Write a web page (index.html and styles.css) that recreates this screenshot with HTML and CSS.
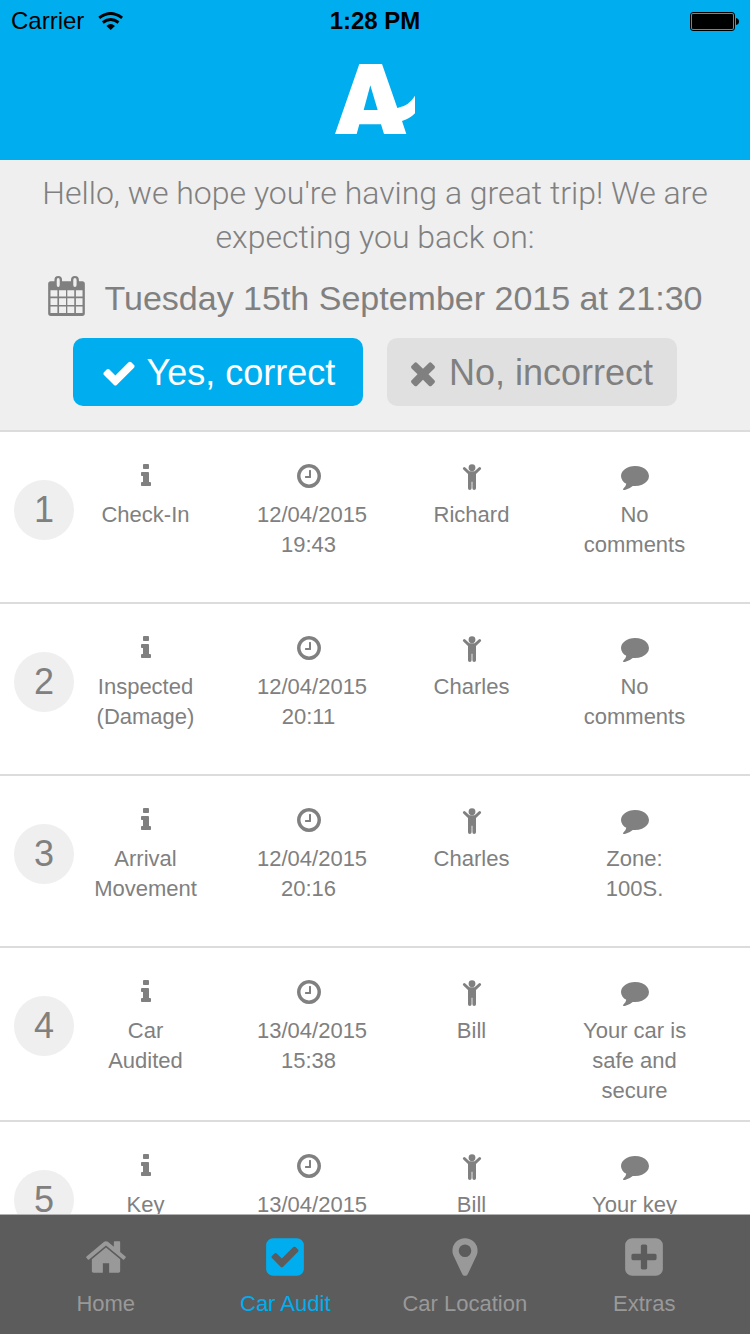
FILE: index.html
```html
<!DOCTYPE html>
<html lang="en">
<head>
<meta charset="utf-8">
<meta name="viewport" content="width=device-width, initial-scale=1">
<title>Car Audit</title>
<link rel="stylesheet" href="styles.css">
</head>
<body>
<svg class="sprite" aria-hidden="true">
  <symbol id="info" viewBox="0 0 1792 1792"><path d="M1216 1344v128q0 26-19 45t-45 19h-512q-26 0-45-19t-19-45v-128q0-26 19-45t45-19h64v-384h-64q-26 0-45-19t-19-45v-128q0-26 19-45t45-19h384q26 0 45 19t19 45v576h64q26 0 45 19t19 45zm-128-1152v192q0 26-19 45t-45 19h-256q-26 0-45-19t-19-45v-192q0-26 19-45t45-19h256q26 0 45 19t19 45z"/></symbol>
  <symbol id="clock" viewBox="0 0 1792 1792"><path d="M1024 544v448q0 14-9 23t-23 9h-320q-14 0-23-9t-9-23v-64q0-14 9-23t23-9h224v-352q0-14 9-23t23-9h64q14 0 23 9t9 23zm416 352q0-148-73-273t-198-198-273-73-273 73-198 198-73 273 73 273 198 198 273 73 273-73 198-198 73-273zm224 0q0 209-103 385.500t-279.500 279.500-385.500 103-385.500-103-279.500-279.500-103-385.500 103-385.500 279.500-279.500 385.500-103 385.500 103 279.500 279.500 103 385.500z"/></symbol>
  <symbol id="child" viewBox="0 0 28 28"><circle cx="14" cy="5.7" r="3.4"/><path d="M5.300 5.400a1.400 1.400 0 0 1 2 0L11.400 9.200H16.600L20.700 5.400a1.400 1.400 0 0 1 2 2L18 12V26.200a1.800 1.800 0 0 1-3.600 0V19.800h-.8V26.200a1.800 1.800 0 0 1-3.600 0V12L5.300 7.400a1.400 1.400 0 0 1 0-2z"/></symbol>
  <symbol id="comment" viewBox="0 0 1792 1792"><path d="M1792 896q0 174-120 321.500t-326 233-450 85.500q-70 0-145-8-198 175-460 242-49 14-114 22-17 2-30.500-9t-17.500-29v-1q-3-4-.5-12t2-10 4.500-9.500l6-9 7-8.500 8-9q7-8 31-34.500t34.500-38 31-39.500 32.500-51 27-59 26-76q-157-89-247.500-220t-90.500-281q0-130 71-248.500t191-204.500 286-136.500 348-50.500q244 0 450 85.500t326 233 120 321.500z"/></symbol>
</svg>

<div class="app">
  <header class="header">
    <div class="status">
      <span class="carrier">Carrier
        <svg class="wifi" viewBox="294 33 75 55" aria-hidden="true"><g fill="none" stroke="#000" stroke-width="9"><path d="M297 51Q332 24 367 51"/><path d="M308 65Q332 47 356 65"/></g><path d="M319 76Q332 63 345 76L332 88z"/></svg>
      </span>
      <time class="clock">1:28 PM</time>
      <svg class="battery" viewBox="0 0 49 19" aria-hidden="true"><rect x=".5" y=".5" width="44" height="18" rx="2.500" fill="none" stroke="#000"/><rect x="2" y="2" width="41" height="15" rx="1"/><path d="M46 6q3 .5 3 3.500t-3 3.500z"/></svg>
    </div>
    <svg class="logo" viewBox="46 42 240 210" role="img" aria-label="Home"><path fill-rule="evenodd" d="M46 252L119 42H187L233 174Q269 167 286 137V190Q272 205 247 213L260 252H193L184 223H119L111 252zM152 106L132 180H174z"/></svg>
  </header>

  <section class="intro">
    <p class="greeting">Hello, we hope you're having a great trip! We are<br>expecting you back on:</p>
    <p class="return">
      <svg class="calendar" viewBox="0 0 111 121" aria-hidden="true"><path fill-rule="evenodd" d="M8 16H19V12Q19 0 30.500 0T42 12V16H69V12Q69 0 81 0T93 12V16H103Q111 16 111 24V113Q111 121 103 121H8Q0 121 0 113V24Q0 16 8 16zM26 12V27Q26 33 30.500 33T35 27V12Q35 6 30.500 6T26 12zM76 12V27Q76 33 81 33T86 27V12Q86 6 81 6T76 12zM7 43V62H28V43zM33 43V62H54V43zM58 43V62H79V43zM84 43V62H104V43zM7 67V88H28V67zM33 67V88H54V67zM58 67V88H79V67zM84 67V88H104V67zM7 92V112H28V92zM33 92V112H54V92zM58 92V112H79V92zM84 92V112H104V92z"/></svg>
      <span>Tuesday 15th September 2015 at 21:30</span>
    </p>
    <div class="actions">
      <button class="btn btn-yes" type="button"><svg viewBox="0 0 1792 1792" aria-hidden="true"><path d="M1671 566q0 40-28 68l-724 724-136 136q-28 28-68 28t-68-28l-136-136-362-362q-28-28-28-68t28-68l136-136q28-28 68-28t68 28l294 295 656-657q28-28 68-28t68 28l136 136q28 28 28 68z"/></svg>Yes, correct</button>
      <button class="btn btn-no" type="button"><svg viewBox="0 0 1792 1792" aria-hidden="true"><path d="M1490 1322q0 40-28 68l-136 136q-28 28-68 28t-68-28l-294-294-294 294q-28 28-68 28t-68-28l-136-136q-28-28-28-68t28-68l294-294-294-294q-28-28-28-68t28-68l136-136q28-28 68-28t68 28l294 294 294-294q28-28 68-28t68 28l136 136q28 28 28 68t-28 68l-294 294 294 294q28 28 28 68z"/></svg>No, incorrect</button>
    </div>
  </section>

  <ol class="audit">
    <li class="entry">
      <span class="number">1</span>
      <div class="cell"><svg><use href="#info"/></svg>Check-In</div>
      <div class="cell"><svg><use href="#clock"/></svg>12/04/2015<br>19:43</div>
      <div class="cell"><svg><use href="#child"/></svg>Richard</div>
      <div class="cell"><svg><use href="#comment"/></svg>No<br>comments</div>
    </li>
    <li class="entry">
      <span class="number">2</span>
      <div class="cell"><svg><use href="#info"/></svg>Inspected<br>(Damage)</div>
      <div class="cell"><svg><use href="#clock"/></svg>12/04/2015<br>20:11</div>
      <div class="cell"><svg><use href="#child"/></svg>Charles</div>
      <div class="cell"><svg><use href="#comment"/></svg>No<br>comments</div>
    </li>
    <li class="entry">
      <span class="number">3</span>
      <div class="cell"><svg><use href="#info"/></svg>Arrival<br>Movement</div>
      <div class="cell"><svg><use href="#clock"/></svg>12/04/2015<br>20:16</div>
      <div class="cell"><svg><use href="#child"/></svg>Charles</div>
      <div class="cell"><svg><use href="#comment"/></svg>Zone:<br>100S.</div>
    </li>
    <li class="entry">
      <span class="number">4</span>
      <div class="cell"><svg><use href="#info"/></svg>Car<br>Audited</div>
      <div class="cell"><svg><use href="#clock"/></svg>13/04/2015<br>15:38</div>
      <div class="cell"><svg><use href="#child"/></svg>Bill</div>
      <div class="cell"><svg><use href="#comment"/></svg>Your car is<br>safe and<br>secure</div>
    </li>
    <li class="entry">
      <span class="number">5</span>
      <div class="cell"><svg><use href="#info"/></svg>Key</div>
      <div class="cell"><svg><use href="#clock"/></svg>13/04/2015</div>
      <div class="cell"><svg><use href="#child"/></svg>Bill</div>
      <div class="cell"><svg><use href="#comment"/></svg>Your key</div>
    </li>
  </ol>

  <nav class="tabs">
    <a class="tab" href="#"><svg viewBox="0 0 1792 1792" aria-hidden="true"><path d="M1472 992v480q0 26-19 45t-45 19h-384v-384h-256v384h-384q-26 0-45-19t-19-45v-480q0-1 .5-3t.5-3l575-474 575 474q1 2 1 6zm223-69l-62 74q-8 9-21 11h-3q-13 0-21-7l-692-577-692 577q-12 8-24 7-13-2-21-11l-62-74q-8-10-7-23.500t11-21.500l719-599q32-26 76-26t76 26l244 204v-195q0-14 9-23t23-9h192q14 0 23 9t9 23v408l219 182q10 8 11 21.500t-7 23.500z"/></svg>Home</a>
    <a class="tab tab-current" href="#" aria-current="page"><svg viewBox="0 0 1792 1792" aria-hidden="true"><path d="M813 1299l614-614q19-19 19-45t-19-45l-102-102q-19-19-45-19t-45 19l-467 467-211-211q-19-19-45-19t-45 19l-102 102q-19 19-19 45t19 45l358 358q19 19 45 19t45-19zm851-883v960q0 119-84.500 203.500t-203.500 84.500h-960q-119 0-203.500-84.500t-84.500-203.500v-960q0-119 84.500-203.500t203.500-84.500h960q119 0 203.500 84.500t84.500 203.500z"/></svg>Car Audit</a>
    <a class="tab" href="#"><svg viewBox="0 0 1792 1792" aria-hidden="true"><path d="M1152 640q0-106-75-181t-181-75-181 75-75 181 75 181 181 75 181-75 75-181zm256 0q0 109-33 179l-364 774q-16 33-47.500 52t-67.500 19-67.500-19-46.500-52l-365-774q-33-70-33-179 0-212 150-362t362-150 362 150 150 362z"/></svg>Car Location</a>
    <a class="tab" href="#"><svg viewBox="0 0 1792 1792" aria-hidden="true"><path d="M1408 960v-128q0-26-19-45t-45-19h-320v-320q0-26-19-45t-45-19h-128q-26 0-45 19t-19 45v320h-320q-26 0-45 19t-19 45v128q0 26 19 45t45 19h320v320q0 26 19 45t45 19h128q26 0 45-19t19-45v-320h320q26 0 45-19t19-45zm256-544v960q0 119-84.500 203.500t-203.500 84.500h-960q-119 0-203.500-84.500t-84.500-203.500v-960q0-119 84.500-203.500t203.500-84.500h960q119 0 203.500 84.500t84.500 203.500z"/></svg>Extras</a>
  </nav>
</div>
</body>
</html>
```
FILE: styles.css
```css
* {
  box-sizing: border-box;
}

body {
  margin: 0;
  font-family: "Liberation Sans", Arial, sans-serif;
  font-size: 22px;
  line-height: 30px;
  color: #808080;
  background: #fff;
}

svg {
  display: block;
  flex: none;
  fill: currentColor;
}

.sprite {
  display: none;
}

.app {
  display: flex;
  flex-direction: column;
  height: 100vh;
}

.header {
  flex: none;
  padding-bottom: 26px;
  background: #00aeef;
}

.status {
  display: grid;
  grid-template-columns: 1fr auto 1fr;
  align-items: center;
  height: 42px;
  margin-bottom: 22px;
  padding: 0 11px;
  font-size: 24px;
  color: #000;
}

.carrier {
  display: flex;
  align-items: center;
  gap: 14px;
}

.wifi {
  width: 25px;
  height: 18px;
}

.clock {
  font-weight: 700;
}

.battery {
  justify-self: end;
  width: 49px;
  height: 19px;
}

.logo {
  width: 80px;
  height: 70px;
  margin: 0 auto;
  color: #fff;
}

.intro {
  flex: none;
  padding: 11px 16px 24px;
  text-align: center;
  background: #efefef;
  border-bottom: 2px solid #dcdcdc;
}

.greeting {
  margin: 0;
  font-family: Roboto, "Liberation Sans", sans-serif;
  font-size: 32px;
  font-weight: 300;
  line-height: 44px;
}

.return {
  display: flex;
  align-items: flex-start;
  justify-content: center;
  gap: 20px;
  margin: 17px 0 18px;
  font-size: 34px;
  line-height: 44px;
}

.calendar {
  width: 37px;
  height: 40px;
}

.actions {
  display: flex;
  justify-content: center;
  gap: 24px;
}

.btn {
  display: flex;
  align-items: center;
  justify-content: center;
  gap: 10px;
  width: 290px;
  height: 68px;
  padding: 2px 0 0;
  border: 0;
  border-radius: 10px;
  font: inherit;
  font-size: 36px;
}

.btn svg {
  width: 36px;
  height: 36px;
}

.btn-yes {
  color: #fff;
  background: #00aeef;
}

.btn-no {
  gap: 8px;
  padding-right: 6px;
  color: #808080;
  background: #e0e0e0;
}

.audit {
  flex: 1;
  min-height: 0;
  margin: 0;
  padding: 0;
  overflow: hidden;
  list-style: none;
}

.entry {
  display: grid;
  grid-template-columns: 60px repeat(4, minmax(0, 1fr));
  align-items: start;
  min-height: 172px;
  padding: 30px 24px 14px 14px;
  border-bottom: 2px solid #dcdcdc;
}

.number {
  margin-top: 18px;
  border-radius: 50%;
  font-size: 36px;
  line-height: 60px;
  text-align: center;
  background: #efefef;
}

.cell {
  padding: 0 40px 0 20px;
  text-align: center;
  white-space: nowrap;
}

.cell svg {
  width: 28px;
  height: 28px;
  margin: 0 auto 10px;
}

.tabs {
  display: grid;
  grid-template-columns: repeat(4, 1fr);
  flex: none;
  height: 120px;
  padding: 20px 16px 0;
  background: #5c5c5c;
  border-top: 1px solid #b2b2b2;
}

.tab {
  display: flex;
  flex-direction: column;
  align-items: center;
  gap: 10px;
  color: #999;
  text-decoration: none;
}

.tab svg {
  width: 44px;
  height: 44px;
}

.tab-current {
  color: #00aeef;
}
```
